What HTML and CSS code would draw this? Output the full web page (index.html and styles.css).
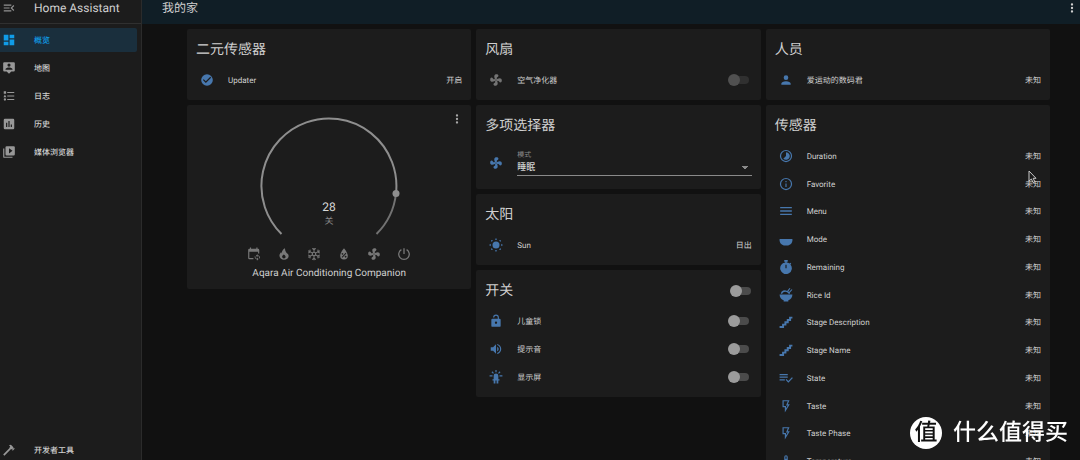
FILE: index.html
```html
<!DOCTYPE html>
<html lang="zh-CN">
<head>
<meta charset="utf-8">
<title>Home Assistant</title>
<link rel="stylesheet" href="styles.css">
</head>
<body>
<svg class="sprite" aria-hidden="true">
  <symbol id="menu-open" viewBox="0 0 24 24"><path d="M21,15.61L19.59,17L14.58,12L19.59,7L21,8.39L17.44,12L21,15.61M3,6H16V8H3V6M3,13V11H13V13H3M3,18V16H16V18H3Z"/></symbol>
  <symbol id="dashboard" viewBox="0 0 24 24"><path d="M13,3V9H21V3M13,21H21V11H13M3,21H11V15H3M3,13H11V3H3V13Z"/></symbol>
  <symbol id="map" viewBox="0 0 24 24"><path fill-rule="evenodd" d="M20,2H4A2,2 0 0,0 2,4V16A2,2 0 0,0 4,18H8L12,22L16,18H20A2,2 0 0,0 22,16V4A2,2 0 0,0 20,2M12,4.3A2.7,2.7 0 0,1 12,9.7A2.7,2.7 0 0,1 12,4.3M18,15H6V14.1C6,12.1 10,11 12,11S18,12.1 18,14.1V15Z"/></symbol>
  <symbol id="list" viewBox="0 0 24 24"><path d="M5,9.5L7.5,14H2.5L5,9.5M3,4H7V8H3V4M5,20A2,2 0 0,0 7,18A2,2 0 0,0 5,16A2,2 0 0,0 3,18A2,2 0 0,0 5,20M9,5V7H21V5H9M9,19H21V17H9V19M9,13H21V11H9V13Z"/></symbol>
  <symbol id="chart" viewBox="0 0 24 24"><path fill-rule="evenodd" d="M5,3H19A2,2 0 0,1 21,5V19A2,2 0 0,1 19,21H5A2,2 0 0,1 3,19V5A2,2 0 0,1 5,3M7,10V17H9V10H7M11,7V17H13V7H11M15,13V17H17V13H15Z"/></symbol>
  <symbol id="media" viewBox="0 0 24 24"><path fill-rule="evenodd" d="M4,6H2V20A2,2 0 0,0 4,22H18V20H4V6M20,2H8A2,2 0 0,0 6,4V16A2,2 0 0,0 8,18H20A2,2 0 0,0 22,16V4A2,2 0 0,0 20,2M12,14.5V5.5L18,10L12,14.5Z"/></symbol>
  <symbol id="hammer" viewBox="0 0 24 24"><path d="M2,19.63L13.43,8.2L12.72,7.5L14.14,6.07L12,3.89C13.2,2.7 15.09,2.7 16.27,3.89L19.87,7.5L18.45,8.91H21.29L22,9.62L18.45,13.21L17.74,12.5V9.62L16.27,11.04L15.56,10.33L4.13,21.76L2,19.63Z"/></symbol>
  <symbol id="dots" viewBox="0 0 24 24"><path d="M12,16A2,2 0 0,1 14,18A2,2 0 0,1 12,20A2,2 0 0,1 10,18A2,2 0 0,1 12,16M12,10A2,2 0 0,1 14,12A2,2 0 0,1 12,14A2,2 0 0,1 10,12A2,2 0 0,1 12,10M12,4A2,2 0 0,1 14,6A2,2 0 0,1 12,8A2,2 0 0,1 10,6A2,2 0 0,1 12,4Z"/></symbol>
  <symbol id="check" viewBox="0 0 24 24"><path fill-rule="evenodd" d="M12,2A10,10 0 0,1 12,22A10,10 0 0,1 12,2M10,17L19,8L17.6,6.6L10,14.2L6.4,10.6L5,12L10,17Z"/></symbol>
  <symbol id="fan" viewBox="0 0 24 24"><path fill-rule="evenodd" d="M12,11A1,1 0 0,0 11,12A1,1 0 0,0 12,13A1,1 0 0,0 13,12A1,1 0 0,0 12,11M12.5,2C17,2 17.11,5.57 14.75,6.75C13.76,7.24 13.32,8.29 13.13,9.22C13.61,9.42 14.03,9.73 14.35,10.13C18.05,8.13 22.03,8.92 22.03,12.5C22.03,17 18.46,17.1 17.28,14.73C16.78,13.74 15.72,13.3 14.79,13.11C14.59,13.59 14.28,14 13.88,14.34C15.87,18.03 15.08,22 11.5,22C7,22 6.91,18.42 9.27,17.24C10.25,16.75 10.69,15.71 10.89,14.79C10.4,14.59 9.97,14.27 9.65,13.87C5.96,15.85 2,15.07 2,11.5C2,7 5.56,6.89 6.74,9.26C7.24,10.25 8.29,10.68 9.22,10.87C9.41,10.39 9.73,9.97 10.14,9.65C8.15,5.96 8.94,2 12.5,2Z"/></symbol>
  <symbol id="person" viewBox="0 0 24 24"><path d="M12,4A4,4 0 0,1 12,12A4,4 0 0,1 12,4M12,14C16.42,14 20,15.79 20,18V20H4V18C4,15.79 7.58,14 12,14Z"/></symbol>
  <symbol id="sun" viewBox="0 0 24 24"><circle cx="12" cy="12" r="6"/><path d="M12,0L14,3H10ZM12,24L14,21H10ZM0,12L3,10V14ZM24,12L21,10V14ZM3.5,3.5L7,4.2L4.2,7ZM20.5,3.5L17,4.2L19.8,7ZM3.5,20.5L7,19.8L4.2,17ZM20.5,20.5L17,19.8L19.8,17Z"/></symbol>
  <symbol id="lock" viewBox="0 0 24 24"><path fill-rule="evenodd" d="M18,8A2,2 0 0,1 20,10V20A2,2 0 0,1 18,22H6A2,2 0 0,1 4,20V10A2,2 0 0,1 6,8H15V6A3,3 0 0,0 9,6H7A5,5 0 0,1 17,6V8H18M12,13A2,2 0 0,0 12,17A2,2 0 0,0 12,13Z"/></symbol>
  <symbol id="volume" viewBox="0 0 24 24"><path d="M14,3.23V5.29C16.89,6.15 19,8.83 19,12C19,15.17 16.89,17.84 14,18.7V20.77C18,19.86 21,16.28 21,12C21,7.72 18,4.14 14,3.23M16.5,12C16.5,10.23 15.5,8.71 14,7.97V16C15.5,15.29 16.5,13.76 16.5,12M3,9V15H7L12,20V4L7,9H3Z"/></symbol>
  <symbol id="led" viewBox="0 0 24 24"><path d="M11,0H13V4H11ZM18.3,2.3L19.7,3.7L17,6.4L15.6,5ZM5.7,2.3L8.4,5L7,6.4L4.3,3.7ZM1,9H6V11H1ZM18,9H23V11H18ZM12,6A4,4 0 0,0 8,10V16H6V18H8V23H11V18H13V23H16V18H18V16H16V10A4,4 0 0,0 12,6Z"/></symbol>
  <symbol id="duration" viewBox="0 0 24 24"><path fill-rule="evenodd" d="M12,1.5A10.5,10.5 0 0,1 12,22.5A10.5,10.5 0 0,1 12,1.5M12,3.6A8.4,8.4 0 0,0 12,20.4A8.4,8.4 0 0,0 12,3.6Z"/><path d="M12,5.5A6.5,6.5 0 1,1 7.4,16.6L12,12Z"/></symbol>
  <symbol id="info" viewBox="0 0 24 24"><path fill-rule="evenodd" d="M12,1.5A10.5,10.5 0 0,1 12,22.5A10.5,10.5 0 0,1 12,1.5M12,3.6A8.4,8.4 0 0,0 12,20.4A8.4,8.4 0 0,0 12,3.6M11,7H13V9H11ZM11,11H13V17H11Z"/></symbol>
  <symbol id="menu" viewBox="0 0 24 24"><path d="M2,5H22V7.4H2ZM2,10.8H22V13.2H2ZM2,16.6H22V19H2Z"/></symbol>
  <symbol id="bowl" viewBox="0 0 24 24"><path d="M1,12H23V14C23,19 19,23 14,23H10C5,23 1,19 1,14Z"/></symbol>
  <symbol id="timer" viewBox="0 0 24 24"><path fill-rule="evenodd" d="M9,0H15V3H13.2V4.2C15,4.4 16.6,5 17.9,6L19.5,4.5L21,6L19.6,7.6A10,10 0 1,1 10.8,4.2V3H9ZM11,8V14H13V8Z"/></symbol>
  <symbol id="rice" viewBox="0 0 24 24"><path d="M1,11H23C23,16 20,19.5 16,21V23H8V21C4,19.5 1,16 1,11Z"/><path d="M3,10A7,7 0 0,1 14,5L18,0L19.5,1L16,6L17,7L21.5,2L23,3.2L18.5,8L19,10H16.5C14,5 7,5 5.5,10Z"/></symbol>
  <symbol id="stairs" viewBox="0 0 24 24"><path d="M1,20.5H7V16.5H11V12.5H15V8.5H19V4.5H23" fill="none" stroke="currentColor" stroke-width="3.4"/></symbol>
  <symbol id="state" viewBox="0 0 24 24"><path d="M1,5H15V7.2H1ZM1,9.5H15V11.7H1ZM1,14H10V16.2H1ZM22.2,10.5L23.8,12L16,20L11.3,15.2L12.8,13.7L16,17Z"/></symbol>
  <symbol id="flash" viewBox="0 0 24 24"><path fill-rule="evenodd" d="M6,2H18L15,9H18.5L10,23V14H6ZM8,4V12H12V16L15,11H12L15,4Z"/></symbol>
  <symbol id="thermometer" viewBox="0 0 24 24"><path fill-rule="evenodd" d="M15,13V5A3,3 0 0,0 9,5V13A5,5 0 1,0 15,13M12,4A1,1 0 0,1 13,5V8H11V5A1,1 0 0,1 12,4Z"/></symbol>
  <symbol id="calendar" viewBox="0 0 24 24"><path d="M5,1H7V3H16V1H18V3H19A2,2 0 0,1 21,5V11H19V8H4V19H11V21H4A2,2 0 0,1 2,19V5A2,2 0 0,1 4,3H5ZM18,12V14A4.5,4.5 0 0,1 22,20L20.8,18.8A2.8,2.8 0 0,0 18,15.6V17.5L15.3,14.8ZM17,23.5V21.5A4.5,4.5 0 0,1 13.5,15.5L14.7,16.7A2.8,2.8 0 0,0 17,20V18L19.8,20.7Z"/></symbol>
  <symbol id="fire" viewBox="0 0 24 24"><path fill-rule="evenodd" d="M17.7,11.2C16.6,9.7 14,8 13.5,2C10,4 7.7,7.4 8.6,11C7.8,10.4 7.3,9.4 7.2,8.5C5,11 4,13 4.2,15.5C4.7,19.5 8,22 12,22C16.5,22 20,19 20,15.3C20,13.6 19,12.4 17.7,11.2M12,19.5C9.8,19.5 8.8,18.2 8.8,16.9C8.8,15.2 10.5,14.4 11.3,13C12.5,13.7 14.7,14.9 14.7,16.8C14.7,18.5 13.6,19.5 12,19.5Z"/></symbol>
  <symbol id="snow" viewBox="0 0 24 24"><path fill="none" stroke="currentColor" stroke-width="1.8" d="M12,1.5V9M12,15V22.5M2,6.5L9.5,10.5M14.5,13.5L22,17.5M2,17.5L9.5,13.5M14.5,10.5L22,6.5M9,2.5L12,5L15,2.5M9,21.5L12,19L15,21.5M2,10.5L5.5,8.5L5,4.5M22,13.5L18.5,15.5L19,19.5M2,13.5L5.5,15.5L5,19.5M22,10.5L18.5,8.5L19,4.5"/><circle cx="12" cy="12" r="3" fill="none" stroke="currentColor" stroke-width="2"/></symbol>
  <symbol id="water" viewBox="0 0 24 24"><path fill-rule="evenodd" d="M12,2C12,2 5.5,9.5 5.5,15A6.5,6.5 0 0,0 18.5,15C18.5,9.5 12,2 12,2M8.5,10.5A1.6,1.6 0 0,1 10.2,13.2A1.6,1.6 0 0,1 8.5,10.5M14.8,10L16,11.2L9.2,18.5L8,17.3ZM14.5,15A1.6,1.6 0 0,1 15,18.2A1.6,1.6 0 0,1 14.5,15Z"/></symbol>
  <symbol id="power" viewBox="0 0 24 24"><path fill="none" stroke="currentColor" stroke-width="2.2" d="M7.5,4.5A9,9 0 1,0 16.5,4.5M12,2V12"/></symbol>
</svg>

<div class="app">
  <aside class="sidebar">
    <div class="brand">
      <button class="icon-button" aria-label="收起菜单"><svg class="icon"><use href="#menu-open"/></svg></button>
      <span>Home Assistant</span>
    </div>
    <nav class="nav">
      <a class="nav-item active" href="#"><svg class="icon"><use href="#dashboard"/></svg><span>概览</span></a>
      <a class="nav-item" href="#"><svg class="icon"><use href="#map"/></svg><span>地图</span></a>
      <a class="nav-item" href="#"><svg class="icon"><use href="#list"/></svg><span>日志</span></a>
      <a class="nav-item" href="#"><svg class="icon"><use href="#chart"/></svg><span>历史</span></a>
      <a class="nav-item" href="#"><svg class="icon"><use href="#media"/></svg><span>媒体浏览器</span></a>
      <a class="nav-item tools" href="#"><svg class="icon"><use href="#hammer"/></svg><span>开发者工具</span></a>
    </nav>
  </aside>

  <div class="page">
    <header class="topbar">
      <span>我的家</span>
      <button class="icon-button" aria-label="更多"><svg class="icon"><use href="#dots"/></svg></button>
    </header>

    <main class="board">
      <div class="column">
        <section class="card">
          <h2 class="title">二元传感器</h2>
          <div class="row"><svg class="icon"><use href="#check"/></svg><span class="name">Updater</span><span>开启</span></div>
        </section>
        <section class="card thermostat">
          <button class="icon-button more" aria-label="更多信息"><svg class="icon"><use href="#dots"/></svg></button>
          <svg class="dial" viewBox="0 0 142 122" role="img" aria-label="28 关">
            <path class="arc" d="M23.5,119A67.5,67.5 0 1,1 138,78.5"/>
            <path class="arc rest" d="M138,78.5A67.5,67.5 0 0,1 118.5,119"/>
            <circle class="handle" cx="138" cy="78.5" r="3.5"/>
            <text class="temperature" x="71" y="96">28</text>
            <text class="mode" x="71" y="109">关</text>
          </svg>
          <div class="modes">
            <button class="icon-button" aria-label="自动"><svg class="icon"><use href="#calendar"/></svg></button>
            <button class="icon-button" aria-label="制热"><svg class="icon"><use href="#fire"/></svg></button>
            <button class="icon-button" aria-label="制冷"><svg class="icon"><use href="#snow"/></svg></button>
            <button class="icon-button" aria-label="除湿"><svg class="icon"><use href="#water"/></svg></button>
            <button class="icon-button" aria-label="送风"><svg class="icon"><use href="#fan"/></svg></button>
            <button class="icon-button" aria-label="关闭"><svg class="icon"><use href="#power"/></svg></button>
          </div>
          <div class="device">Aqara Air Conditioning Companion</div>
        </section>
      </div>

      <div class="column">
        <section class="card">
          <h2 class="title">风扇</h2>
          <div class="row off"><svg class="icon"><use href="#fan"/></svg><label class="name" for="purifier">空气净化器</label><input class="toggle" type="checkbox" id="purifier" disabled></div>
        </section>
        <section class="card">
          <h2 class="title">多项选择器</h2>
          <div class="row select-row">
            <svg class="icon"><use href="#fan"/></svg>
            <div class="field">
              <label for="mode">模式</label>
              <select id="mode"><option>睡眠</option></select>
            </div>
          </div>
        </section>
        <section class="card">
          <h2 class="title">太阳</h2>
          <div class="row"><svg class="icon"><use href="#sun"/></svg><span class="name">Sun</span><span>日出</span></div>
        </section>
        <section class="card">
          <h2 class="title"><label for="all">开关</label><input class="toggle" type="checkbox" id="all"></h2>
          <div class="row"><svg class="icon"><use href="#lock"/></svg><label class="name" for="child">儿童锁</label><input class="toggle" type="checkbox" id="child"></div>
          <div class="row"><svg class="icon"><use href="#volume"/></svg><label class="name" for="sound">提示音</label><input class="toggle" type="checkbox" id="sound"></div>
          <div class="row"><svg class="icon"><use href="#led"/></svg><label class="name" for="screen">显示屏</label><input class="toggle" type="checkbox" id="screen"></div>
        </section>
      </div>

      <div class="column">
        <section class="card">
          <h2 class="title">人员</h2>
          <div class="row"><svg class="icon"><use href="#person"/></svg><span class="name">爱运动的数码君</span><span>未知</span></div>
        </section>
        <section class="card">
          <h2 class="title">传感器</h2>
          <div class="sensors">
            <div class="row"><svg class="icon"><use href="#duration"/></svg><span class="name">Duration</span><span>未知</span></div>
            <div class="row"><svg class="icon"><use href="#info"/></svg><span class="name">Favorite</span><span>未知</span></div>
            <div class="row"><svg class="icon"><use href="#menu"/></svg><span class="name">Menu</span><span>未知</span></div>
            <div class="row"><svg class="icon"><use href="#bowl"/></svg><span class="name">Mode</span><span>未知</span></div>
            <div class="row"><svg class="icon"><use href="#timer"/></svg><span class="name">Remaining</span><span>未知</span></div>
            <div class="row"><svg class="icon"><use href="#rice"/></svg><span class="name">Rice Id</span><span>未知</span></div>
            <div class="row"><svg class="icon"><use href="#stairs"/></svg><span class="name">Stage Description</span><span>未知</span></div>
            <div class="row"><svg class="icon"><use href="#stairs"/></svg><span class="name">Stage Name</span><span>未知</span></div>
            <div class="row"><svg class="icon"><use href="#state"/></svg><span class="name">State</span><span>未知</span></div>
            <div class="row"><svg class="icon"><use href="#flash"/></svg><span class="name">Taste</span><span>未知</span></div>
            <div class="row"><svg class="icon"><use href="#flash"/></svg><span class="name">Taste Phase</span><span>未知</span></div>
            <div class="row"><svg class="icon"><use href="#thermometer"/></svg><span class="name">Temperature</span><span>未知</span></div>
          </div>
        </section>
      </div>
    </main>
  </div>
</div>

<svg class="pointer" viewBox="0 0 9 14" aria-hidden="true"><path d="M1,1V11L3.4,9L5,12.5L6.8,11.8L5.2,8.3H8Z"/></svg>
<div class="watermark"><span class="seal">值</span><span>什么值得买</span></div>
</body>
</html>
```
FILE: styles.css
```css
* {
  box-sizing: border-box;
}

body {
  margin: 0;
  background: #111;
  color: #d0d0d0;
  font-family: Roboto, "Noto Sans CJK SC", sans-serif;
  font-size: 8px;
  line-height: 12px;
  text-rendering: geometricPrecision;
}

.sprite {
  display: none;
}

.app {
  display: flex;
  height: 100vh;
  overflow: hidden;
}

.icon {
  display: block;
  flex: none;
  width: 14px;
  height: 14px;
  fill: currentColor;
}

.icon-button {
  padding: 0;
  border: 0;
  background: none;
  color: inherit;
}

/* Sidebar */
.sidebar {
  display: flex;
  flex-direction: column;
  flex: none;
  width: 142px;
  border-right: 1px solid #2b2b2b;
  background: #1c1c1c;
}

.brand {
  display: flex;
  align-items: center;
  gap: 18px;
  height: 24px;
  padding: 0 2px 8px;
  border-bottom: 1px solid #303030;
  font-size: 12px;
}

.brand .icon {
  color: #929292;
}

.nav {
  display: flex;
  flex: 1;
  flex-direction: column;
  gap: 4px;
  padding: 4px 4px 0 0;
}

.nav-item {
  display: flex;
  align-items: center;
  gap: 18px;
  height: 24px;
  padding-left: 2px;
  border-radius: 0 2px 2px 0;
  color: #d0d0d0;
  font-weight: 500;
  text-decoration: none;
}

.nav-item span {
  padding-top: 2px;
}

.nav-item .icon {
  color: #989898;
}

.nav-item.active {
  background: #1a2f3d;
}

.nav-item.active,
.nav-item.active .icon {
  color: #109ce8;
}

.nav-item.tools {
  margin: auto 0 -2px;
}

/* Page */
.page {
  flex: 1;
  min-width: 0;
}

.topbar {
  display: flex;
  align-items: center;
  justify-content: space-between;
  height: 24px;
  padding: 0 1px 8px 20px;
  background: #101e26;
  font-size: 12px;
}

.board {
  display: grid;
  grid-template-columns: repeat(3, minmax(0, 1fr));
  align-items: start;
  gap: 5px;
  padding: 5px 30px 0 45px;
}

.column {
  display: flex;
  flex-direction: column;
  gap: 5px;
}

.card {
  padding: 6px 9px;
  border-radius: 2px;
  background: #1c1c1c;
}

.title {
  display: flex;
  align-items: center;
  justify-content: space-between;
  height: 28px;
  margin: 0 0 3px;
  padding-top: 2px;
  font-size: 14px;
  font-weight: 400;
}

.title .toggle {
  margin-right: 1px;
}

.row {
  display: flex;
  align-items: center;
  gap: 14px;
  min-height: 28px;
  padding-left: 4px;
}

.row > span,
.row > label {
  padding-top: 2px;
}

.row .icon {
  color: #4777ad;
}

.row.off .icon {
  color: #747474;
}

.row .toggle {
  margin-right: 3px;
}

.name {
  flex: 1;
}

.sensors {
  display: grid;
  grid-auto-rows: 1fr;
  height: 333px;
}

.sensors .row {
  min-height: 0;
}

/* Switch */
.toggle {
  position: relative;
  flex: none;
  width: 21px;
  height: 12px;
  margin: 0;
  appearance: none;
}

.toggle::before {
  content: "";
  position: absolute;
  inset: 2px 0 2px 4px;
  border-radius: 4px;
  background: #4b4b4b;
}

.toggle::after {
  content: "";
  position: absolute;
  inset: 0 auto 0 0;
  width: 12px;
  border-radius: 50%;
  background: #9b9b9b;
}

.toggle:disabled::before {
  background: #303030;
}

.toggle:disabled::after {
  background: #505050;
}

/* Option selector */
.select-row {
  min-height: 41px;
}

.field {
  display: flex;
  flex: 1;
  flex-direction: column;
}

.field label {
  color: #8a8a8a;
  font-size: 7px;
  line-height: 10px;
}

.field select {
  height: 16px;
  padding: 0;
  border: 0;
  border-bottom: 1px solid #8a8a8a;
  border-radius: 0;
  appearance: none;
  background: conic-gradient(from -45deg at 50% 100%, #8a8a8a 90deg, transparent 0) right 4px center / 6px 3px no-repeat;
  background: conic-gradient(from 315deg at 50% 100%, #8a8a8a 90deg, transparent 0) right 4px center / 6px 3px no-repeat;
  color: #d0d0d0;
  font: 500 9px Roboto, "Noto Sans CJK SC", sans-serif;
}

/* Thermostat */
.thermostat {
  position: relative;
  display: flex;
  flex-direction: column;
  align-items: center;
  padding: 10px 9px 8px;
}

.more {
  position: absolute;
  top: 7px;
  right: 7px;
  color: #a8a8a8;
}

.dial {
  display: block;
  width: 142px;
  height: 122px;
}

.arc {
  fill: none;
  stroke: #8e8e8e;
  stroke-width: 2;
}

.arc.rest {
  stroke: #727272;
}

.handle {
  fill: #8e8e8e;
}

.dial text {
  text-anchor: middle;
}

.temperature {
  fill: #d8d8d8;
  font-size: 12px;
}

.mode {
  fill: #8a8a8a;
  font-size: 9px;
}

.modes {
  display: flex;
  gap: 16px;
  margin: 10px 0 5px;
  color: #787878;
}

.device {
  font-size: 10px;
  line-height: 15px;
}

/* Overlays */
.pointer {
  position: fixed;
  top: 170px;
  left: 1028px;
  width: 9px;
  height: 14px;
  fill: #1c1c1c;
  stroke: #c8c8c8;
}

.watermark {
  position: fixed;
  right: 12px;
  bottom: 11px;
  display: flex;
  align-items: center;
  gap: 11px;
  color: #fff;
  font-size: 23px;
  font-weight: 500;
  line-height: 32px;
}

.seal {
  width: 32px;
  border-radius: 50%;
  background: #fff;
  color: #111;
  text-align: center;
}
```
